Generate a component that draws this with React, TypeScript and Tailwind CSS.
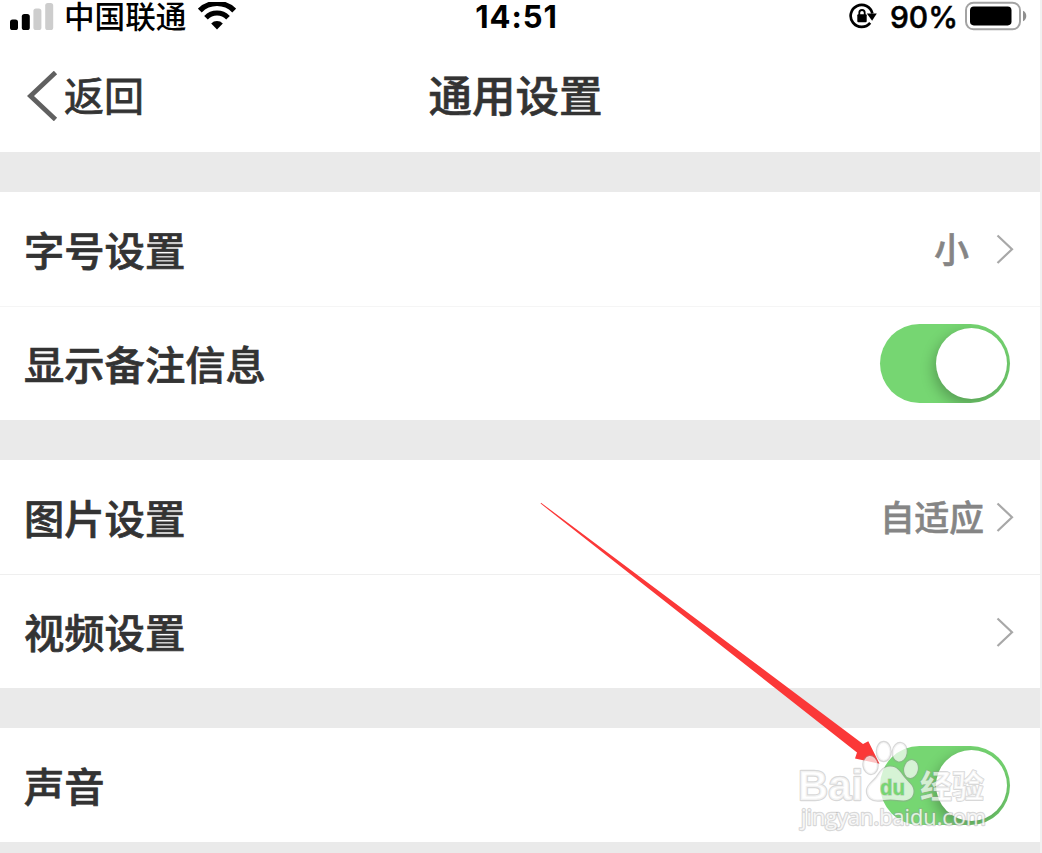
import React from 'react';

function SignalIcon() {
  return (
    <svg width="45" height="30" viewBox="0 0 45 30" className="block">
      <rect x="1" y="18.5" width="8" height="10.5" rx="2.6" fill="#000" />
      <rect x="12.8" y="13" width="8" height="16" rx="2.6" fill="#000" />
      <rect x="24.4" y="7.5" width="8" height="21.5" rx="2.6" fill="#cdcdcd" />
      <rect x="36.2" y="2" width="8" height="27" rx="2.6" fill="#cdcdcd" />
    </svg>
  );
}

function WifiIcon() {
  return (
    <svg width="38" height="28" viewBox="0 0 38 28" fill="none" stroke="#000" className="block">
      <path d="M1.8 8.6a24.2 24.2 0 0 1 34.4 0" strokeWidth="5.4" />
      <path d="M8 15.8a15.2 15.2 0 0 1 22 0" strokeWidth="5" />
      <path d="M19 27.4l-5.8-5.9a8 8 0 0 1 11.6 0z" fill="#000" stroke="none" />
    </svg>
  );
}

function RotationLockIcon() {
  return (
    <svg width="28" height="26" viewBox="0 0 28 26" className="block">
      <path d="M21.2 19.8A11 11 0 1 1 23.4 10.5" fill="none" stroke="#000" strokeWidth="2.7" />
      <path d="M17.8 10.5h10l-4.7 7.2z" fill="#000" />
      <rect x="8.3" y="11.2" width="9.4" height="8" rx="1" fill="#000" />
      <path d="M10.3 12V9.7a2.7 2.7 0 0 1 5.4 0V12" fill="none" stroke="#000" strokeWidth="1.8" />
    </svg>
  );
}

function BatteryIcon() {
  return (
    <svg width="62" height="30" viewBox="0 0 62 30" className="block">
      <rect x="1" y="1.7" width="54" height="26.6" rx="7.5" fill="none" stroke="#a3a3a3" strokeWidth="2" />
      <rect x="5" y="5.6" width="41.5" height="18.8" rx="3.8" fill="#000" />
      <path d="M58 9.8c1.9.8 3.3 2.8 3.3 5.2s-1.4 4.4-3.3 5.2z" fill="#8f8f8f" />
    </svg>
  );
}

function Chevron() {
  return (
    <svg width="18" height="30" viewBox="0 0 18 30" fill="none" className="block">
      <path d="M1.5 1.5L16 15.2L1.5 29" stroke="#a8a8a8" strokeWidth="2.2" />
    </svg>
  );
}

function Toggle() {
  return (
    <div className="mr-[30px] flex h-[79px] w-[130px] items-center justify-end overflow-hidden rounded-full bg-[#76d672] pr-[3.5px]">
      <div className="h-[71px] w-[71px] rounded-full bg-white shadow-[-2px_5px_14px_rgba(0,0,0,0.28)]" />
    </div>
  );
}

function Row({ label, divider, children }: { label: string; divider?: string; children: React.ReactNode }) {
  return (
    <div className={`flex h-[114px] items-center justify-between bg-white pl-6 ${divider ?? ''}`}>
      <span className="pt-1.5 text-[40.3px] leading-none font-medium text-[#333] [-webkit-text-stroke:0.7px_#333]">
        {label}
      </span>
      {children}
    </div>
  );
}

function Link({ value, gap = 'mr-3' }: { value?: string; gap?: string }) {
  return (
    <div className="flex items-center pr-[26px]">
      {value && (
        <span
          className={`pt-[3px] text-[34.7px] leading-none font-medium text-[#858585] [-webkit-text-stroke:0.6px_#858585] ${gap}`}
        >
          {value}
        </span>
      )}
      <Chevron />
    </div>
  );
}

function Arrow() {
  return (
    <svg width="1042" height="853" viewBox="0 0 1042 853" className="pointer-events-none absolute top-0 left-0">
      <path d="M541 502.7L863 744L868.3 741.3L879.5 763.7L855 758.5L857 752.5L540.6 503.6Z" fill="#fb3838" />
    </svg>
  );
}

function Watermark() {
  return (
    <svg
      width="200"
      height="100"
      viewBox="790 735 200 100"
      className="pointer-events-none absolute top-[735px] left-[790px] [paint-order:stroke]"
      fill="#fff"
      fillOpacity="0.7"
      stroke="#999"
      strokeOpacity="0.38"
      strokeWidth="2.4"
      strokeLinejoin="round"
    >
      <text x="798" y="799.5" fontSize="43" fontWeight="700" fontFamily="Liberation Sans, sans-serif" textLength="65" lengthAdjust="spacingAndGlyphs">
        Bai
      </text>
      <ellipse cx="870.5" cy="765" rx="7" ry="9" transform="rotate(-8 870.5 765)" />
      <ellipse cx="883.7" cy="751.5" rx="6.8" ry="9.5" />
      <ellipse cx="899.7" cy="752.3" rx="7" ry="9.3" transform="rotate(8 899.7 752.3)" />
      <ellipse cx="911" cy="769" rx="6.8" ry="9" transform="rotate(12 911 769)" />
      <path d="M890 766.5c7 0 10 5 14 10.5c4 5.2 9.5 8 9.5 14c0 6-4 9.5-10 9.5c-5 0-8-1-13-1s-8 1-13 1c-6 0-10.5-3.5-10.5-9.5c0-6 6-9 9.5-13.5c4-5.5 6.5-11 13.5-11z" />
      <text x="880" y="795" fontSize="22" fontWeight="700" fontFamily="Liberation Sans, sans-serif" textLength="25" lengthAdjust="spacingAndGlyphs" fill="#76d672" fillOpacity="1" strokeWidth="1.4">
        du
      </text>
      <text x="920" y="797.5" fontSize="32" fontWeight="700" fontFamily="Noto Sans CJK SC, sans-serif" textLength="64" strokeWidth="1.8">
        经验
      </text>
      <text x="801" y="825" fontSize="21.5" fontFamily="Open Sans, sans-serif" textLength="185" lengthAdjust="spacingAndGlyphs" fillOpacity="0.8">
        jingyan.baidu.com
      </text>
    </svg>
  );
}

export default function App() {
  return (
    <div className="relative h-[853px] w-[1042px] overflow-hidden border-r-2 border-[#f1f1f1] bg-[#eaeaea] font-['Inter','Noto_Sans_CJK_SC',sans-serif]">
      <div className="grid h-8 grid-cols-3 items-center bg-white text-black">
        <div className="flex items-center pl-[9px]">
          <SignalIcon />
          <span className="ml-[10px] pt-0.5 text-[30.6px] leading-[30px] font-medium">中国联通</span>
          <span className="ml-[12px]">
            <WifiIcon />
          </span>
        </div>
        <span className="pt-0.5 pr-[7px] text-center text-[31px] leading-[30px] font-bold tracking-[0.9px]">14:51</span>
        <div className="flex items-center justify-end pr-[13px]">
          <RotationLockIcon />
          <span className="mr-[7px] ml-[13px] pt-0.5 text-[30px] leading-[30px] font-medium [-webkit-text-stroke:0.5px_#000]">
            90%
          </span>
          <BatteryIcon />
        </div>
      </div>

      <header className="grid h-[120px] grid-cols-3 items-center bg-white pt-[7px] text-[#333]">
        <div className="flex items-center pl-[27px]">
          <svg width="31" height="50" viewBox="0 0 31 50" fill="none" className="block">
            <path d="M28.5 1.5L3.5 25L28.5 48.5" stroke="#606060" strokeWidth="4.8" />
          </svg>
          <span className="ml-[6px] pt-0.5 text-[40px] leading-none [-webkit-text-stroke:0.8px_#333]">返回</span>
        </div>
        <h1 className="pt-0.5 pr-[9px] text-center text-[43.5px] leading-none font-medium [-webkit-text-stroke:0.6px_#333]">
          通用设置
        </h1>
      </header>

      <section className="mt-10">
        <Row label="字号设置">
          <Link value="小" gap="mr-[27px]" />
        </Row>
        <Row label="显示备注信息" divider="border-t border-[#f5f5f5]">
          <Toggle />
        </Row>
      </section>

      <section className="mt-10">
        <Row label="图片设置">
          <Link value="自适应" />
        </Row>
        <Row label="视频设置" divider="border-t border-[#efefef]">
          <Link />
        </Row>
      </section>

      <section className="mt-10">
        <Row label="声音">
          <Toggle />
        </Row>
      </section>

      <Arrow />
      <Watermark />
    </div>
  );
}
